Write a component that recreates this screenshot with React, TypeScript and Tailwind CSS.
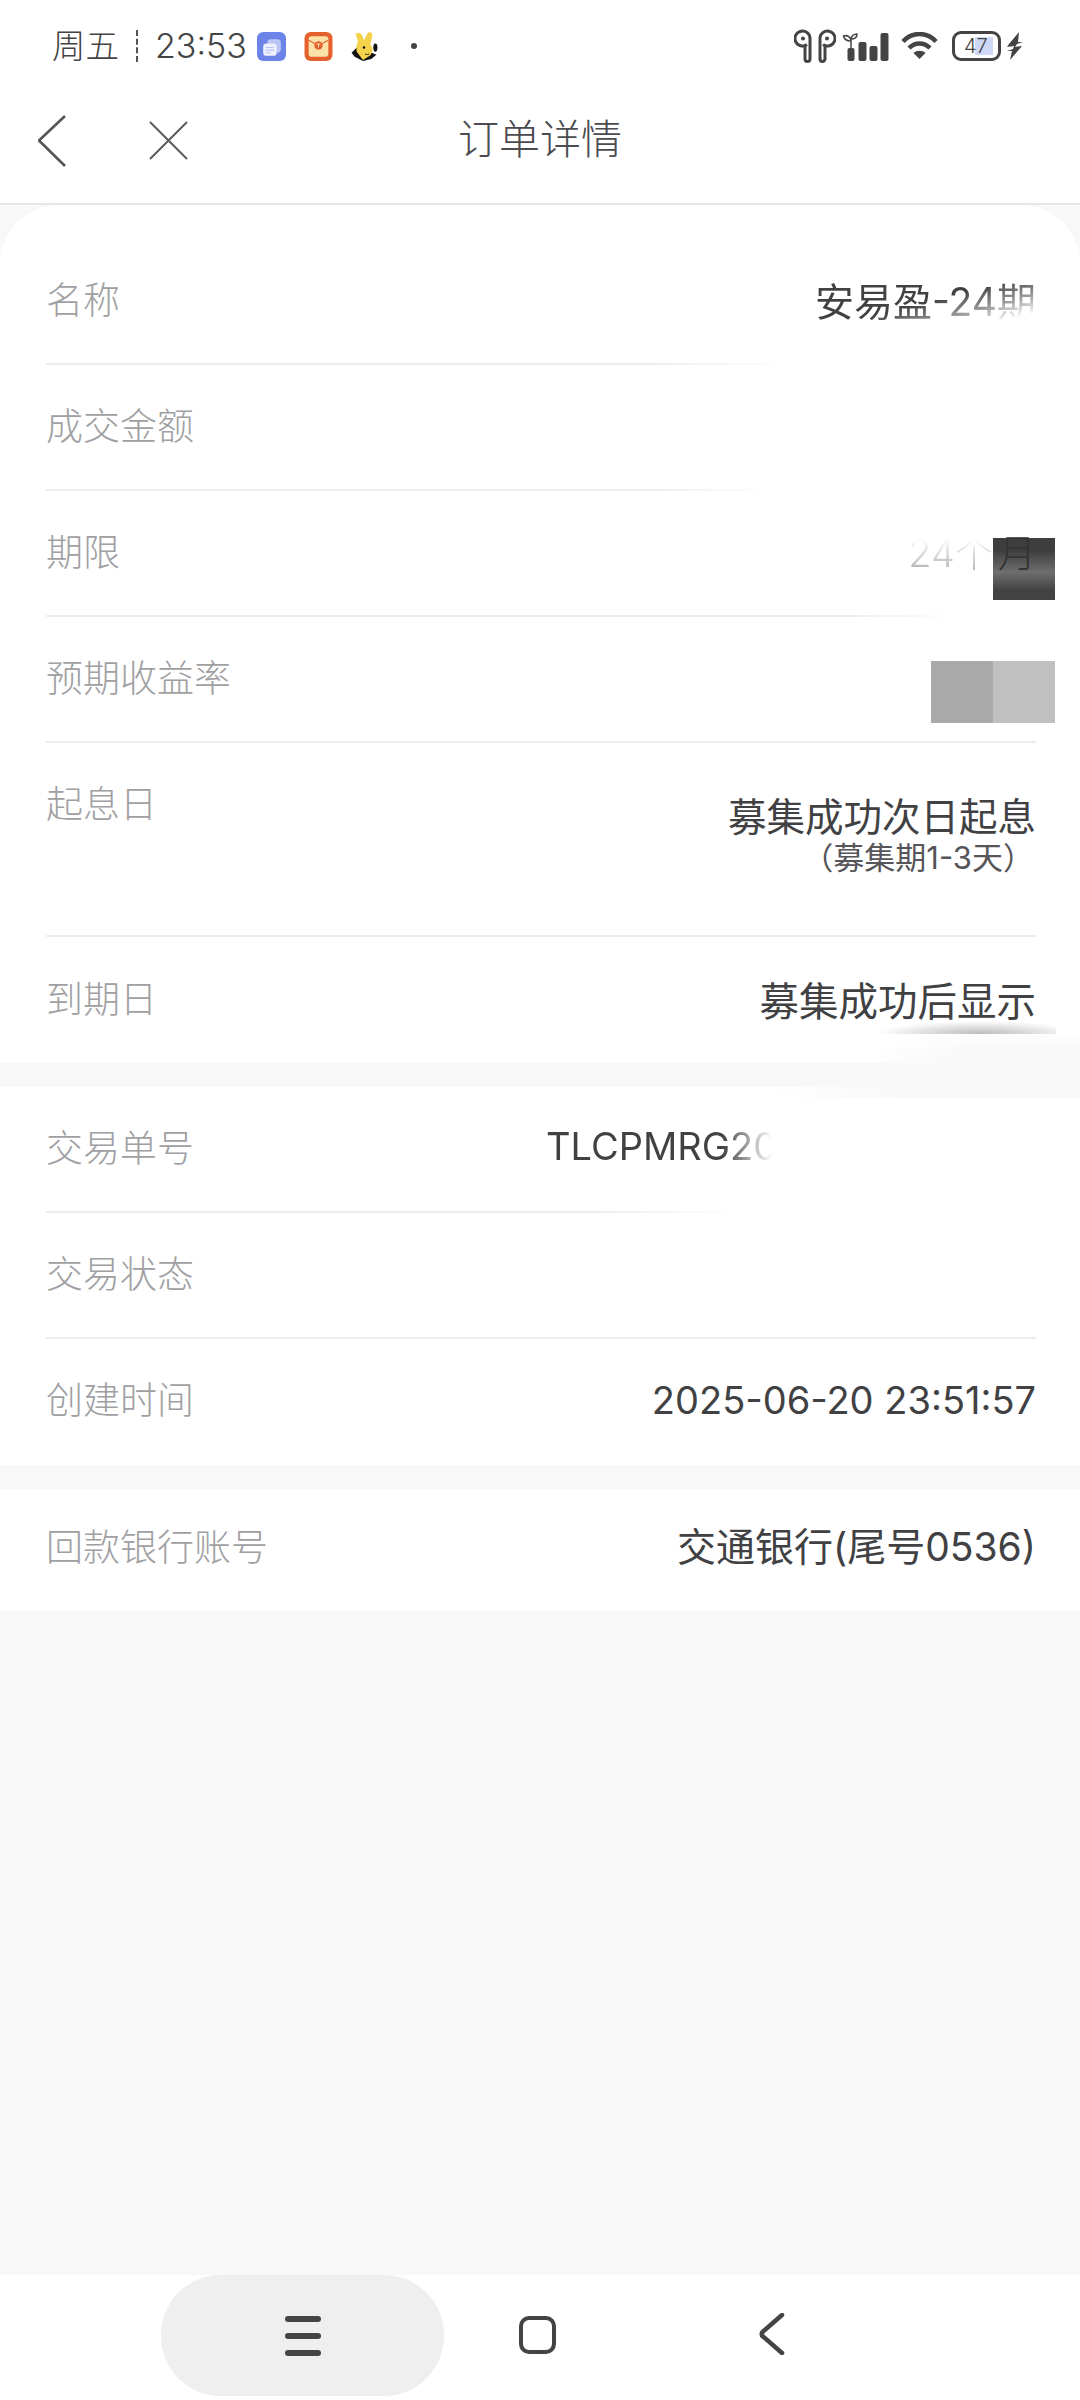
const sans = "font-['Inter','Noto_Sans_CJK_SC',sans-serif]";

function Row({
  label,
  value,
  divider = 'bg-[#ececec]',
  height = 'h-[126px]',
  top = 'pt-[35px]',
  children,
}: {
  label: string;
  value?: string;
  divider?: string;
  height?: string;
  top?: string;
  children?: React.ReactNode;
}) {
  return (
    <div className={`relative flex justify-between pl-[46px] pr-[44px] ${top} ${height}`}>
      <div className="text-[37px] leading-[54px] font-light text-[#a0a0a3]">{label}</div>
      {value && <div className="text-[39.5px] leading-[58px] font-normal text-[#414144]">{value}</div>}
      {children}
      {divider && <div className={`absolute left-[46px] right-[44px] bottom-0 h-[2px] ${divider}`} />}
    </div>
  );
}

function StatusBar() {
  return (
    <div className="flex h-[68px] items-center justify-between pl-[52px] pr-[57px] pt-[24px] text-[#444]">
      <div className="flex items-center">
        <span className="w-[67px] text-[33.5px] leading-[44px] font-light">周五</span>
        <span className="ml-[17px] h-[32px] border-l-2 border-dashed border-[#555]" />
        <span className="ml-[17px] w-[91px] text-[34px] leading-[44px] font-light">23:53</span>
        <svg className="ml-[11px]" width="29" height="29" viewBox="0 0 28 28">
          <rect width="28" height="28" rx="6" fill="#6c83e8" />
          <rect x="10" y="7" width="13" height="13" rx="3" fill="#b9c5f5" />
          <rect x="6" y="11" width="13" height="12" rx="3" fill="#eef1fd" />
          <path d="M8.5 15h8M8.5 17.5h8M8.5 20h5" stroke="#b9c5f5" strokeWidth="1" />
        </svg>
        <svg className="ml-[18px]" width="29" height="29" viewBox="0 0 27 28">
          <rect width="27" height="28" rx="6" fill="#e4602c" />
          <rect x="4" y="4" width="19" height="20" rx="3" fill="#fbe2a9" />
          <path d="M4 8l9.5 5L23 8" stroke="#e4602c" strokeWidth="1" fill="none" />
          <circle cx="13.5" cy="13" r="4" fill="#e4602c" />
          <path d="M11.8 11.6h3.4M13.5 11.6v3.4" stroke="#fbe2a9" strokeWidth="1" />
        </svg>
        <svg className="ml-[18px]" width="27" height="29" viewBox="0 0 25 28">
          <path d="M3 24L0 20l6-6 18 8-5 4-8 2z" fill="#111" />
          <path d="M4 3c0-3 5-3 6 0l2 5 3-6c1-3 6-2 5 2l-2 8c4 4 2 10-2 12l-5 3-6-8c-1-6 1-8 1-11z" fill="#f5d24c" />
          <ellipse cx="23" cy="15" rx="2" ry="4" fill="#111" />
          <circle cx="12" cy="15" r="1.2" fill="#111" />
          <path d="M13 21c1 1 3 1 4 0" stroke="#111" strokeWidth="1" fill="none" />
        </svg>
        <span className="ml-[33px] h-[6px] w-[6px] rounded-full bg-[#444]" />
      </div>
      <div className="flex items-center">
        <svg width="42" height="34" viewBox="0 0 42 34" fill="none" stroke="#444" strokeWidth="3">
          <path d="M13 15.5A7.5 7.5 0 1 1 16 9.5V30a2.5 2.5 0 0 1-5 0V16" />
          <path d="M29 15.5A7.5 7.5 0 1 0 26 9.5V30a2.5 2.5 0 0 0 5 0V16" />
          <circle cx="9" cy="9.5" r="2" fill="#444" stroke="none" />
          <circle cx="33" cy="9.5" r="2" fill="#444" stroke="none" />
        </svg>
        <svg className="ml-[6px]" width="47" height="30" viewBox="0 0 46 30" fill="#444">
          <rect x="5" y="17" width="7" height="13" rx="2" />
          <rect x="16" y="11" width="8" height="19" rx="2" />
          <rect x="27" y="15" width="8" height="15" rx="2" />
          <rect x="38" y="2" width="8" height="28" rx="2" />
          <path d="M8.5 17V8M8.5 10C6 10 2 9 1 5c3-1 7 0 7.5 5M8.5 8c0-3 3-5 6-5 0 3-2 5-6 5" stroke="#444" strokeWidth="1.5" fill="none" />
        </svg>
        <svg className="ml-[12px]" width="37" height="28" viewBox="0 0 37 28" fill="none" stroke="#444" strokeWidth="4.5">
          <path d="M2 9.5C11-.5 26-.5 35 9.5" />
          <path d="M8 16c6-6 15-6 21 0" />
          <path d="M18.5 27l-6-6c3-3 9-3 12 0z" fill="#444" stroke="none" />
        </svg>
        <div className="relative ml-[14px] flex h-[30px] w-[49px] items-center overflow-hidden rounded-[9px] border-[3.5px] border-[#444] pl-[9px] text-[20px] leading-none font-light">
          <div className="absolute inset-y-[3px] left-[20px] w-[18px] bg-[#d0d8f8]" />
          <span className="relative">47</span>
        </div>
        <svg className="ml-[6px]" width="16" height="28" viewBox="0 0 16 28" fill="#444">
          <path d="M12 0L2 12l-2 3 7-1-1 3-6 2 5 0-2 9 12-14-7 1 2-3 6-2h-5z" />
        </svg>
      </div>
    </div>
  );
}

function NavBar() {
  return (
    <div className="relative flex h-[137px] items-center justify-center border-b-2 border-[#e6e6e6] pt-[6px]">
      <svg className="absolute left-[38px] top-[47px]" width="28" height="52" viewBox="0 0 28 52" fill="none" stroke="#555559" strokeWidth="2.6" strokeLinejoin="round">
        <path d="M27 1L1 25.5 27 51" />
      </svg>
      <svg className="absolute left-[149px] top-[53px]" width="39" height="39" viewBox="0 0 39 39" fill="none" stroke="#5c5c60" strokeWidth="2">
        <path d="M1 1l37 37M38 1L1 38" />
      </svg>
      <div className="text-[41px] leading-[56px] font-light text-[#4b4b50]">订单详情</div>
    </div>
  );
}

function BottomNav() {
  return (
    <div className="flex h-[125px] items-start bg-white">
      <div className="ml-[161px] flex h-[121px] w-[283px] items-center justify-center rounded-[60px] bg-[#efefef]">
        <div className="flex flex-col gap-[11px]">
          <div className="h-[6px] w-[36px] rounded-full bg-[#444]" />
          <div className="h-[6px] w-[36px] rounded-full bg-[#444]" />
          <div className="h-[6px] w-[36px] rounded-full bg-[#444]" />
        </div>
      </div>
      <div className="ml-[75px] mt-[41px] h-[38px] w-[37px] rounded-[10px] border-[4.5px] border-[#444]" />
      <svg className="ml-[203px] mt-[38px]" width="26" height="42" viewBox="0 0 26 42" fill="none" stroke="#444" strokeWidth="4.5" strokeLinecap="round" strokeLinejoin="round">
        <path d="M23 2L4 18.5a3 3 0 0 0 0 5L23 40" />
      </svg>
    </div>
  );
}

export default function App() {
  return (
    <div className={`flex h-[2400px] w-[1080px] flex-col overflow-hidden bg-[#f8f8f8] ${sans}`}>
      <div className="bg-white">
        <StatusBar />
        <NavBar />
      </div>

      <div className="relative">
        <div className="rounded-t-[60px] bg-white">
          <Row label="名称" divider="bg-[linear-gradient(to_right,#ececec_60%,#ffffff_75%)]" height="h-[160px]" top="pt-[69px]">
            <div className="-mt-[1px] self-start bg-[linear-gradient(165deg,#414144_50%,#999999_68%,#ffffff_85%)] bg-clip-text text-[39px] leading-[58px] font-normal text-transparent">
              安易盈-24期
            </div>
          </Row>
          <Row label="成交金额" divider="bg-[linear-gradient(to_right,#ececec_60%,#ffffff_73%)]" />
          <Row label="期限" divider="bg-[linear-gradient(to_right,#ececec_80%,#ffffff_92%)]">
            <div className="-mr-[19px] -mt-[2px] flex items-start">
              <div className="bg-[linear-gradient(180deg,#ffffff_25%,#aaaaaa_85%)] bg-clip-text text-[38px] leading-[58px] font-light text-transparent">
                24个
              </div>
              <div className="mt-[14px] h-[62px] w-[62px] bg-[linear-gradient(180deg,#3e3e3e_20%,#6e6e6e_55%,#424242_85%)] pl-[5px]">
                <div className="-mt-[14px] text-[38px] leading-[58px] font-light text-[#333]">月</div>
              </div>
            </div>
          </Row>
          <Row label="预期收益率">
            <div className="-mr-[19px] mt-[9px] flex">
              <div className="h-[62px] w-[62px] bg-[#aaaaaa]" />
              <div className="h-[62px] w-[62px] bg-[#c0c0c0]" />
            </div>
          </Row>
          <Row label="起息日" height="h-[194px]">
            <div className="mt-[10px] flex flex-col items-end">
              <div className="text-[38.5px] leading-[58px] font-normal text-[#414144]">募集成功次日起息</div>
              <div className="-mt-[7px] pr-[2px] text-[31px] leading-[38px] font-normal text-[#55555a]">（募集期1-3天）</div>
            </div>
          </Row>
          <Row label="到期日" value="募集成功后显示" divider="" top="pt-[36px]" />
        </div>
        {/* smudges from the redaction */}
        <div className="absolute right-[24px] top-[815px] h-[14px] w-[190px] bg-[radial-gradient(ellipse_at_60%_100%,#bbbbbb_0%,#ffffff_65%)]" />
        <div className="absolute right-0 top-[829px] h-[29px] w-[200px] bg-[radial-gradient(ellipse_at_70%_100%,#f8f8f8_35%,#ffffff_80%)]" />
      </div>

      <div className="relative mt-[24px] bg-white">
        <div className="absolute right-0 top-0 h-[11px] w-[307px] bg-[linear-gradient(to_right,#ffffff,#f8f8f8_45%)]" />
        <Row label="交易单号" divider="bg-[linear-gradient(to_right,#ececec_55%,#ffffff_70%)]">
          <div className="absolute left-[546px] top-[30px] w-[226px] bg-[linear-gradient(to_right,#414144_78%,#ffffff_100%)] bg-clip-text text-[38px] leading-[58px] font-normal whitespace-nowrap text-transparent">
            TLCPMRG20
          </div>
        </Row>
        <Row label="交易状态" />
        <Row label="创建时间" divider="">
          <div className="-mt-[3px] text-[38px] leading-[58px] font-normal text-[#414144]">2025-06-20 23:51:57</div>
        </Row>
      </div>

      <div className="mt-[24px] bg-white">
        <Row label="回款银行账号" divider="" height="h-[122px]" top="pt-[32px]">
          <div className="-mt-[3px] text-[39px] leading-[58px] font-normal text-[#414144]">交通银行(尾号0536)</div>
        </Row>
      </div>

      <div className="flex-1" />
      <BottomNav />
    </div>
  );
}
